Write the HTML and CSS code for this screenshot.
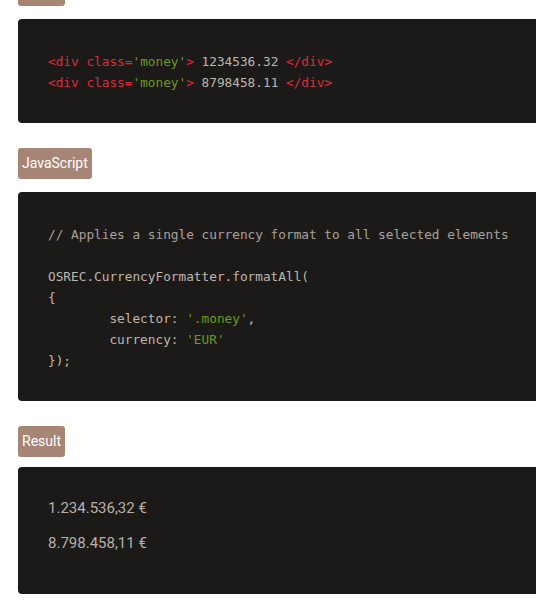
FILE: index.html
```html
<!DOCTYPE html>
<html>
<head>
<meta charset="utf-8">
<link rel="stylesheet" href="styles.css">
</head>
<body>
<div class="page">
  <span class="label label-top"></span>
  <pre class="code"><span class="tag">&lt;div</span> <span class="tag">class=</span><span class="str">'money'</span><span class="tag">&gt;</span> 1234536.32 <span class="tag">&lt;/div&gt;</span>
<span class="tag">&lt;div</span> <span class="tag">class=</span><span class="str">'money'</span><span class="tag">&gt;</span> 8798458.11 <span class="tag">&lt;/div&gt;</span></pre>

  <span class="label">JavaScript</span>
  <pre class="code"><span class="comment">// Applies a single currency format to all selected elements</span>

OSREC.CurrencyFormatter.formatAll(
{
        selector: <span class="str">'.money'</span>,
        currency: <span class="str">'EUR'</span>
});</pre>

  <span class="label">Result</span>
  <div class="result">
    <div class="money">1.234.536,32 €</div>
    <div class="money">8.798.458,11 €</div>
  </div>
</div>
</body>
</html>
```

FILE: styles.css
```css
html, body {
  margin: 0;
  padding: 0;
  background: #ffffff;
  overflow: hidden;
}

.page {
  width: 580px;
  padding-left: 18px;
  margin-top: -25px;
  display: flex;
  flex-direction: column;
  align-items: flex-start;
  font-family: Roboto, "Liberation Sans", sans-serif;
}

.label {
  display: inline-block;
  height: 31px;
  line-height: 31px;
  padding: 0 4px;
  background: #a78575;
  color: #ffffff;
  font-size: 14px;
  border-radius: 3px;
}

.label-top {
  width: 39px;
}

.code {
  align-self: stretch;
  margin: 13px 0 25px 0;
  padding: 32px 30px 30px 30px;
  background: #1c1a19;
  border-radius: 4px;
  font-family: "DejaVu Sans Mono", "Liberation Mono", monospace;
  font-size: 12.75px;
  line-height: 21px;
  color: #bdb7b0;
  white-space: pre;
}

.tag { color: #e0283a; }
.str { color: #6b9a1c; }
.comment { color: #a8a29c; }

.result {
  align-self: stretch;
  margin-top: 10px;
  padding: 31px 30px 26px 30px;
  background: #1c1a19;
  border-radius: 4px;
}

.money {
  font-size: 15px;
  line-height: 20px;
  color: #b7b0a9;
  margin-bottom: 15px;
}
```
